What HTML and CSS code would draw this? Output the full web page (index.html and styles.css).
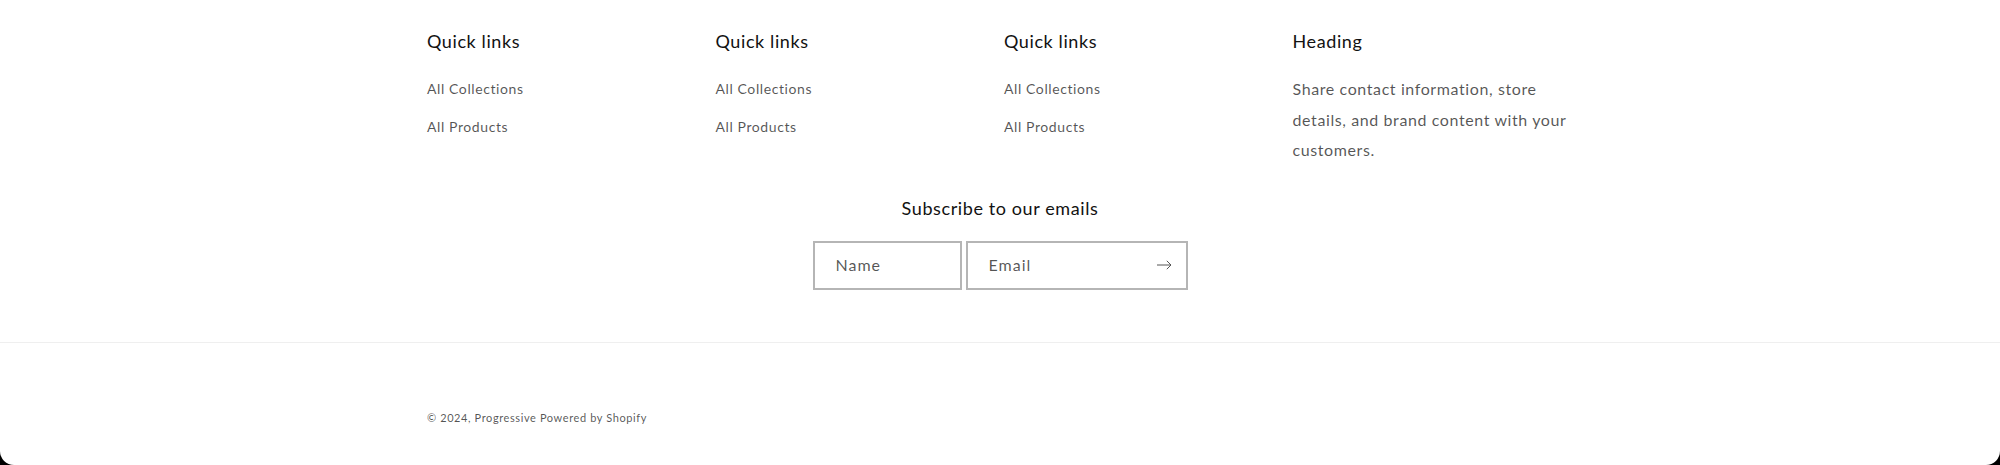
FILE: index.html
```html
<!DOCTYPE html>
<html lang="en">
<head>
<meta charset="utf-8">
<title>Footer</title>
<link rel="stylesheet" href="styles.css">
</head>
<body>
<div class="page">
  <footer class="footer">
    <div class="footer-top">
      <div class="blocks">
        <div class="block">
          <h2 class="block-heading">Quick links</h2>
          <ul class="menu">
            <li><a href="#" class="menu-link">All Collections</a></li>
            <li><a href="#" class="menu-link">All Products</a></li>
          </ul>
        </div>
        <div class="block">
          <h2 class="block-heading">Quick links</h2>
          <ul class="menu">
            <li><a href="#" class="menu-link">All Collections</a></li>
            <li><a href="#" class="menu-link">All Products</a></li>
          </ul>
        </div>
        <div class="block">
          <h2 class="block-heading">Quick links</h2>
          <ul class="menu">
            <li><a href="#" class="menu-link">All Collections</a></li>
            <li><a href="#" class="menu-link">All Products</a></li>
          </ul>
        </div>
        <div class="block">
          <h2 class="block-heading">Heading</h2>
          <p class="block-text">Share contact information, store details, and brand content with your customers.</p>
        </div>
      </div>
      <div class="newsletter">
        <h2 class="newsletter-heading">Subscribe to our emails</h2>
        <form class="newsletter-form">
          <div class="field field-name">
            <span class="field-label">Name</span>
          </div>
          <div class="field field-email">
            <span class="field-label">Email</span>
            <span class="field-button">
              <svg class="arrow" width="15" height="10" viewBox="0 0 15 10" fill="none">
                <path d="M0 5H14" stroke="currentColor" stroke-width="1"/>
                <path d="M9.8 0.8L14 5L9.8 9.2" stroke="currentColor" stroke-width="1"/>
              </svg>
            </span>
          </div>
        </form>
      </div>
    </div>
    <div class="footer-bottom">
      <div class="copyright">© 2024, <a href="#" class="copyright-link">Progressive</a> <a href="#" class="copyright-link">Powered by Shopify</a></div>
    </div>
  </footer>
</div>
</body>
</html>
```
FILE: styles.css
```css
html, body {
  margin: 0;
  padding: 0;
  background: #000;
}

body {
  font-family: Lato, "Liberation Sans", sans-serif;
  font-weight: 400;
  color: #121212;
}

.page {
  background: #fff;
  height: 465px;
  border-radius: 0 0 14px 14px;
  overflow: hidden;
}

.footer-top {
  width: 1146px;
  margin: 0 auto;
  padding-top: 29px;
  padding-bottom: 52px;
}

.blocks {
  display: grid;
  grid-template-columns: repeat(4, 1fr);
  column-gap: 8px;
  align-items: start;
}

.block-heading {
  margin: 0;
  font-size: 18px;
  line-height: 24px;
  font-weight: 400;
  letter-spacing: 0.6px;
  color: #121212;
}

.menu {
  list-style: none;
  margin: 17px 0 0;
  padding: 0;
}

.menu li {
  padding: 5px 0;
  line-height: 26.6px;
}

.menu-link {
  font-size: 14px;
  letter-spacing: 0.6px;
  color: rgba(18, 18, 18, 0.72);
  text-decoration: none;
}

.block-text {
  margin: 21px 0 0;
  font-size: 16px;
  line-height: 30.5px;
  letter-spacing: 0.6px;
  color: rgba(18, 18, 18, 0.72);
  padding-right: 6px;
}

.newsletter {
  margin-top: 29px;
  display: flex;
  flex-direction: column;
  align-items: center;
}

.newsletter-heading {
  margin: 0;
  font-size: 18px;
  line-height: 26px;
  font-weight: 400;
  letter-spacing: 0.6px;
  color: #121212;
}

.newsletter-form {
  margin-top: 20px;
  display: flex;
  gap: 4px;
}

.field {
  box-sizing: border-box;
  height: 49px;
  border: 2px solid #b5b5b5;
  display: flex;
  align-items: center;
  padding-left: 21px;
  padding-bottom: 2px;
}

.field-name {
  width: 149px;
}

.field-email {
  width: 222px;
  justify-content: space-between;
  padding-right: 14px;
}

.field-label {
  font-size: 16px;
  letter-spacing: 1px;
  color: rgba(18, 18, 18, 0.72);
}

.field-button {
  display: flex;
  align-items: center;
  padding-top: 2px;
  color: #555;
}

.arrow {
  display: block;
}

.footer-bottom {
  border-top: 1px solid #efefef;
}

.copyright {
  width: 1146px;
  margin: 0 auto;
  padding-top: 67.5px;
  font-size: 11px;
  line-height: 16px;
  letter-spacing: 0.6px;
  color: rgba(18, 18, 18, 0.72);
}

.copyright-link {
  color: inherit;
  text-decoration: none;
}
```
